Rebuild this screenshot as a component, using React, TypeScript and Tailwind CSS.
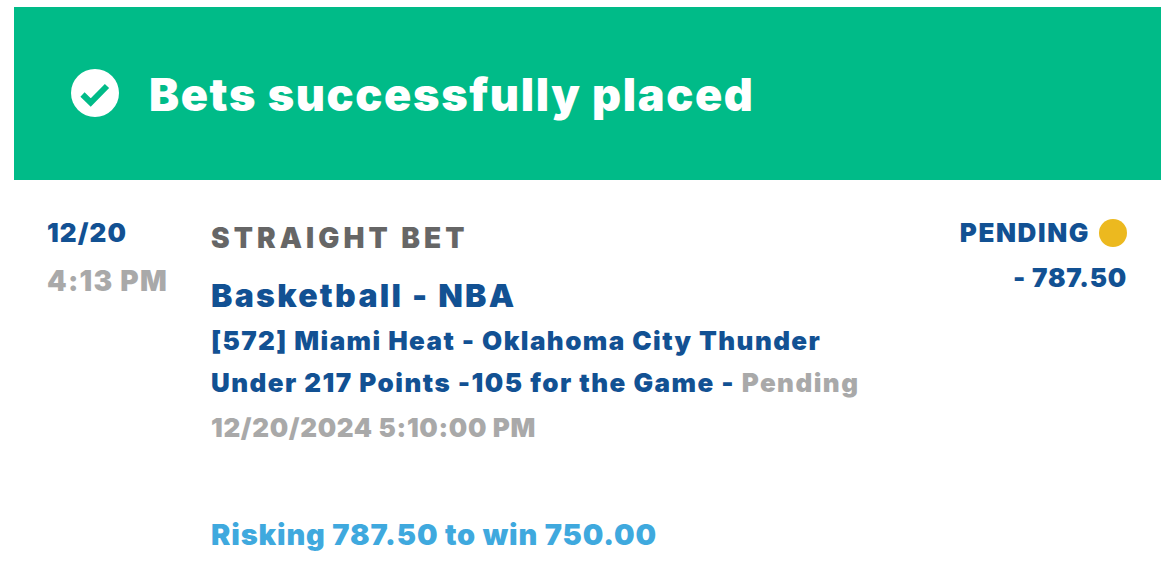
const App = () => {
  return (
    <div className="w-[1170px] h-[565px] overflow-hidden bg-white pt-[7px] px-[14px] pr-[9px] font-['Inter',sans-serif] font-black">
      <div className="h-[173px] bg-[#00bb88] flex items-center pl-[57px] gap-[30px] pb-[2px]">
        <svg width="48" height="48" viewBox="0 0 48 48">
          <circle cx="24" cy="24" r="24" fill="#fff" />
          <path d="M11.5 25.5 L19.7 33.5 L36 17" fill="none" stroke="#00bb88" strokeWidth="6" />
        </svg>
        <h1 className="text-[45px] leading-[52px] tracking-[1.63px] mt-[4px] text-white">Bets successfully placed</h1>
      </div>
      <div className="flex pt-[37px] pl-[33px] pr-[34px]">
        <div className="w-[164px] shrink-0">
          <p className="text-[26px] leading-[30px] tracking-[1.1px] mt-[1px] text-[#125193]">12/20</p>
          <p className="text-[28px] leading-[32px] tracking-[1.25px] mt-[17px] text-[#a9a9a9]">4:13 PM</p>
        </div>
        <div className="flex-1">
          <p className="text-[28px] leading-[34px] tracking-[4.05px] text-[#666666] mt-[4px]">STRAIGHT BET</p>
          <p className="text-[32px] leading-[40px] tracking-[2.3px] mt-[21px] text-[#125193]">Basketball - NBA</p>
          <p className="text-[26px] leading-[42px] tracking-[1.4px] mt-[4px] text-[#125193]">[572] Miami Heat - Oklahoma City Thunder</p>
          <p className="text-[26px] leading-[42px] tracking-[1.45px] text-[#125193]">
            Under 217 Points -105 for the Game - <span className="text-[#a9a9a9]">Pending</span>
          </p>
          <p className="text-[26px] leading-[34px] tracking-[0.65px] mt-[7px] text-[#a9a9a9]">12/20/2024 5:10:00 PM</p>
          <p className="text-[29px] leading-[36px] tracking-[0.85px] mt-[72px] text-[#3fa9de]">Risking 787.50 to win 750.00</p>
        </div>
        <div className="flex flex-col items-end shrink-0">
          <div className="flex items-center gap-[9px]">
            <span className="text-[26px] leading-[32px] tracking-[1.6px] text-[#125193]">PENDING</span>
            <span className="w-[28px] h-[28px] rounded-full bg-[#ecb91f]" />
          </div>
          <p className="text-[26px] leading-[32px] tracking-[0.75px] mt-[13px] text-[#125193]">- 787.50</p>
        </div>
      </div>
    </div>
  );
};

export default App;
